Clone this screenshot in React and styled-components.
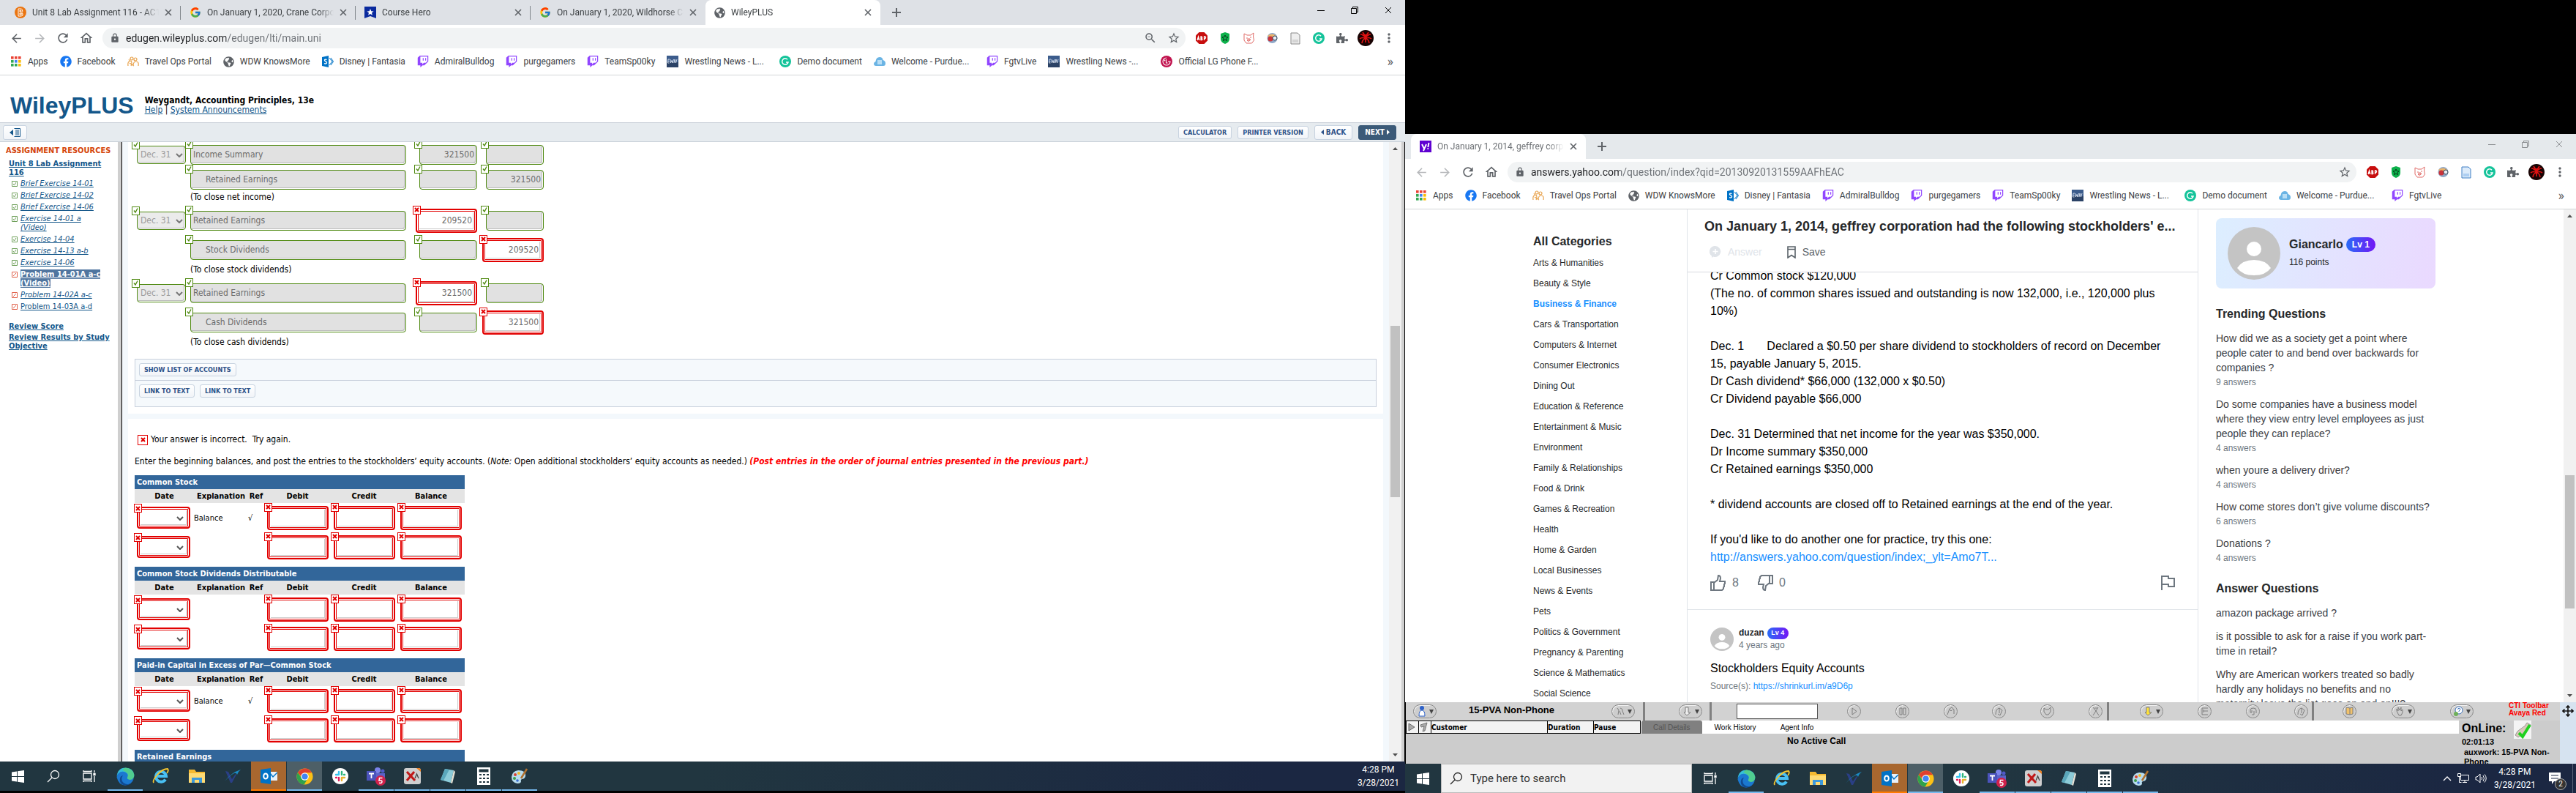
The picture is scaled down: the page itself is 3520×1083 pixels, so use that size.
import React from 'react';
import styled, { createGlobalStyle, css } from 'styled-components';
import { FcGoogle } from 'react-icons/fc';
import { FaFacebook, FaTwitch, FaPuzzlePiece, FaGlobeAmericas } from 'react-icons/fa';
import { MdArrowBack, MdArrowForward, MdRefresh, MdOutlineHome, MdLock, MdStarBorder, MdMoreVert, MdZoomOut } from 'react-icons/md';

const GlobalStyle = createGlobalStyle`
  * { box-sizing: border-box; }
  body { margin: 0; background: #000; overflow: hidden; font-family: 'Liberation Sans', Arial, sans-serif; }
  button, input, select { font: inherit; margin: 0; padding: 0; }
  button { background: none; border: 0; color: inherit; }
  svg { display: block; flex: none; }
  h1, h2, p, ul { margin: 0; padding: 0; }
  ul { list-style: none; }
`;

const uiFont = "Roboto, 'Open Sans', sans-serif";
const wileyFont = "'DejaVu Sans Condensed', 'DejaVu Sans', sans-serif";

/* ---------- desktop ---------- */

const Desktop = styled.div`
  display: grid;
  grid-template-columns: 6fr 5fr;
  height: 100vh;
`;

const Monitor = styled.div`
  display: flex;
  flex-direction: column;
  min-width: 0;
  min-height: 0;
  overflow: hidden;
  padding: ${(p) => p.$pad || 0};
`;

const Window = styled.section`
  flex: 1;
  min-height: 0;
  display: flex;
  flex-direction: column;
  background: #fff;
`;

/* ---------- browser ---------- */

const TabStrip = styled.div`
  display: flex;
  align-items: stretch;
  height: 34px;
  flex: none;
  padding-left: 8px;
  background: ${(p) => (p.$inactive ? '#e5e9ec' : '#dee1e6')};
  font: 12px ${uiFont};
  color: #3c4043;
`;

const TabItem = styled.div`
  display: flex;
  align-items: center;
  gap: 8px;
  width: 239px;
  padding: 0 12px;
  position: relative;
  ${(p) =>
    p.$active
      ? css`
          background: #fff;
          border-radius: 8px 8px 0 0;
        `
      : css`
          &:not(:has(+ [data-active]))::after {
            content: '';
            position: absolute;
            right: 0;
            top: 8px;
            height: 19px;
            border-right: 1px solid #80868b;
          }
        `}
`;

const TabTitle = styled.span`
  flex: 1;
  min-width: 0;
  overflow: hidden;
  white-space: nowrap;
  color: ${(p) => (p.$dim ? '#6b6f73' : '#3c4043')};
  mask-image: linear-gradient(90deg, #000 88%, transparent);
`;

const IconButton = styled.button`
  display: flex;
  align-items: center;
  justify-content: center;
  width: ${(p) => p.$w || 32}px;
  flex: none;
  color: ${(p) => p.$c || '#5f6368'};
`;

const WindowControls = styled.div`
  display: flex;
  margin-left: auto;
  padding-bottom: 6px;
  color: ${(p) => (p.$inactive ? '#8a8d90' : '#000')};
`;

const Toolbar = styled.div`
  display: flex;
  align-items: center;
  height: 36px;
  flex: none;
  padding: 0 6px;
`;

const Omnibox = styled.div`
  flex: 1;
  display: flex;
  align-items: center;
  height: 28px;
  border-radius: 14px;
  background: #f1f3f4;
  padding-left: 10px;
  margin: 0 6px;
  color: #5f6368;
`;

const UrlInput = styled.input`
  flex: 1;
  border: 0;
  outline: 0;
  margin-left: 8px;
  font: 14px ${uiFont};
  color: #202124;
  background: linear-gradient(90deg, #202124 ${(p) => p.$host}px, #6b6f74 ${(p) => p.$host}px);
  background-clip: text;
  -webkit-text-fill-color: transparent;
`;

const Bookmarks = styled.nav`
  display: flex;
  align-items: center;
  gap: 16px;
  height: 33px;
  flex: none;
  padding: 0 14px 4px;
  border-bottom: 1px solid #d3d5d8;
  font: 12px ${uiFont};
`;

const Bookmark = styled.a`
  display: flex;
  align-items: center;
  gap: 8px;
  width: ${(p) => (p.$capped ? '138px' : 'auto')};
  color: #3c4043;
  text-decoration: none;
  white-space: nowrap;
`;

const More = styled.button`
  margin-left: auto;
  font-size: 18px;
  line-height: 18px;
  padding-right: 2px;
  color: #5f6368;
`;

const Cross = ({ size = 10, w = 1.6 }) => (
  <svg width={size} height={size} viewBox="0 0 10 10" stroke="currentColor" strokeWidth={w}>
    <path d="M1 1l8 8M9 1L1 9" />
  </svg>
);

const Globe = () => <FaGlobeAmericas size={15} color="#5f6368" />;

const Blackboard = () => (
  <svg width="16" height="16" viewBox="0 0 16 16">
    <circle cx="8" cy="8" r="8" fill="#ea7511" />
    <path d="M5 3v10h4q3-.5 2-3-.5-1.500-1.500-2 2-1 1-3.500Q10 3 8.500 3z M7 5h1.500q1 1 0 2H7z M7 9h2q1 1 0 2H7z" fill="none" stroke="#fff" strokeWidth="1" />
  </svg>
);

const CourseHero = () => (
  <svg width="16" height="16" viewBox="0 0 16 16">
    <path d="M0 0h16v16l-8-3-8 3z" fill="#0a2a9e" />
    <path d="M8 3l1.300 3.300 3.300.2-2.600 2 .9 3.300L8 10l-2.900 1.800.9-3.300-2.600-2 3.300-.2z" fill="#fff" />
  </svg>
);

const YahooIcon = () => (
  <svg width="16" height="16" viewBox="0 0 16 16">
    <path fill="#5f01d1" d="M0 0h16v16H0z" />
    <path d="M3 5l3 6M9 5l-4 9M12.500 3l-1.200 6M10.500 11h1.500" stroke="#fff" strokeWidth="1.900" />
  </svg>
);

const AppsIcon = () => (
  <svg width="16" height="16" viewBox="0 0 16 16">
    {['#ea4335', '#ea4335', '#ea4335', '#34a853', '#4285f4', '#fbbc04', '#34a853', '#34a853', '#fbbc04'].map((c, i) => (
      <rect key={i} x={1 + (i % 3) * 5} y={1 + Math.floor(i / 3) * 5} width="3.600" height="3.600" fill={c} />
    ))}
  </svg>
);

const Travel = () => (
  <svg width="16" height="14" viewBox="0 0 16 14" fill="none" stroke="#e8a24c" strokeWidth="1.200">
    <circle cx="6" cy="3" r="2" />
    <circle cx="11" cy="4" r="2" />
    <path d="M1 13q-1-7 4-7 2 3 0 7M8 13q0-6 4-6t3 6M3 9l6 4M2 4l2 3" />
  </svg>
);

const Sharepoint = () => (
  <svg width="16" height="16" viewBox="0 0 16 16">
    <path d="M0 2l9-2v16l-9-2z" fill="#0072c6" />
    <path d="M10 3l4 5-4 5M12 3l3.500 5-3.500 5" fill="none" stroke="#3a92d2" strokeWidth="1.200" />
    <path d="M6.500 5.500q-3-1-3 .8 0 1 1.500 1.600t1.500 1.700q0 2-3.500 1" fill="none" stroke="#fff" strokeWidth="1.400" />
  </svg>
);

const Ewn = () => (
  <svg width="16" height="16" viewBox="0 0 16 16">
    <path fill="#3c5c8c" d="M0 0h16v16H0z" />
    <path fill="#2b4266" d="M0 9h16v7H0z" />
    <path d="M4 5H2l-.5 5h2M2 7.500h1.500M5 5l.4 5L7 6.500 8 10l1.500-5M10 10l1-5 1.500 5 1.500-5" fill="none" stroke="#dfe7f2" strokeWidth=".9" />
  </svg>
);

const Grammarly = () => (
  <svg width="16" height="16" viewBox="0 0 16 16">
    <circle cx="8" cy="8" r="8" fill="#15c39a" />
    <path d="M11 5.200A4.200 4.200 0 1 0 12 9H9" fill="none" stroke="#fff" strokeWidth="1.500" />
  </svg>
);

const Purdue = () => (
  <svg width="16" height="12" viewBox="0 0 16 12">
    <path d="M3 12q-3 0-3-3 0-2 2.500-3Q3 0 8 0q4 0 4.500 4Q16 5 16 8.500q0 3.500-3 3.500z" fill="#6bb4e4" />
    <rect x="5" y="4" width="6" height="6" fill="#b9def5" />
  </svg>
);

const Lg = () => (
  <svg width="16" height="16" viewBox="0 0 16 16">
    <circle cx="8" cy="8" r="8" fill="#c1134e" />
    <path d="M8 3a5 5 0 1 0 5 5h-3M7.500 5v5H9.500" fill="none" stroke="#fff" strokeWidth="1.100" />
    <circle cx="5.500" cy="6.500" r=".9" fill="#fff" />
  </svg>
);

const DocIcon = ({ on }) => (
  <svg width="14" height="17" viewBox="0 0 14 17">
    <path d="M1 1h9l3 3v12H1z" fill={on ? '#dcebfa' : '#eee'} stroke={on ? '#3f7fc4' : '#888'} />
    <path d="M3 13h8M3 11h8" stroke={on ? '#7fb2e8' : '#bbb'} />
  </svg>
);

const getExtensions = (docOn) => [
  <svg key="abp" width="18" height="18" viewBox="0 0 18 18">
    <path d="M5.500 1h7L17 5.500v7L12.500 17h-7L1 12.500v-7z" fill="#c70d0d" />
    <path d="M3 12l1.500-5L6 12M3.500 10.500h2M8 7v4.500h1.500q1-1.200-.3-2.300 1-1.200-.3-2.200zM12.500 12V7h1.300q1.500 1.300 0 2.600h-1.300" fill="none" stroke="#fff" strokeWidth="1.300" />
  </svg>,
  <svg key="shield" width="14" height="16" viewBox="0 0 14 16">
    <path d="M7 0l6 2v7q0 5-6 7-6-2-6-7V2z" fill="#0db14b" />
    <path d="M7 4l1.200 2.600 2.800.3-2.100 1.900.6 2.800L7 10.200l-2.500 1.400.6-2.800L3 6.900l2.800-.3z" fill="none" stroke="#08391b" />
  </svg>,
  <svg key="pig" width="17" height="17" viewBox="0 0 17 17" fill="none" stroke="#e06a67">
    <path d="M2 2l4 2h5l4-3-.5 5 1 5-3 4H5l-3-4zM5 8h2M10 7h2M6 11q2 3 5-1M7 9h3v2H7z" />
  </svg>,
  <svg key="ball" width="17" height="17" viewBox="0 0 17 17">
    <circle cx="8.500" cy="8" r="7" fill="#8fa8c8" />
    <path d="M2 5q6-5 12 0L9 9z" fill="#e9b36a" />
    <circle cx="6" cy="9" r="3.500" fill="#c9333b" />
    <circle cx="12" cy="8" r="3" fill="#e8edf5" stroke="#345" />
  </svg>,
  <DocIcon key="doc" on={docOn} />,
  <Grammarly key="gram" />,
  <FaPuzzlePiece key="puzzle" size={16} />,
  <svg key="avatar" width="22" height="22" viewBox="0 0 22 22">
    <circle cx="11" cy="11" r="11" fill="#180303" />
    <path d="M11 6v11M4 6q4 0 7 5 3-5 7-5M3 12q4-3 8 0 4-3 8 0M6 18q1-6 5-6t5 6M7 3l4 6 4-6" fill="none" stroke="#e01212" strokeWidth="1.700" />
  </svg>,
  <MdMoreVert key="menu" size={20} />,
];

const bookmarks = [
  { label: 'Apps', icon: <AppsIcon /> },
  { label: 'Facebook', icon: <FaFacebook size={16} color="#1877f2" /> },
  { label: 'Travel Ops Portal', icon: <Travel /> },
  { label: 'WDW KnowsMore', icon: <Globe /> },
  { label: 'Disney | Fantasia', icon: <Sharepoint /> },
  { label: 'AdmiralBulldog', icon: <FaTwitch size={16} color="#9146ff" /> },
  { label: 'purgegamers', icon: <FaTwitch size={16} color="#9146ff" /> },
  { label: 'TeamSp00ky', icon: <FaTwitch size={16} color="#9146ff" /> },
  { label: 'Wrestling News - L...', icon: <Ewn />, capped: true },
  { label: 'Demo document', icon: <Grammarly /> },
  { label: 'Welcome - Purdue...', icon: <Purdue />, capped: true },
  { label: 'FgtvLive', icon: <FaTwitch size={16} color="#9146ff" /> },
  { label: 'Wrestling News -...', icon: <Ewn />, capped: true },
  { label: 'Official LG Phone F...', icon: <Lg /> },
];

const BrowserChrome = ({ tabs, active, inactive, url, host, zoomed, marks }) => (
  <>
    <TabStrip $inactive={inactive}>
      {tabs.map((t, i) => (
        <TabItem key={t.title} $active={i === active} data-active={i === active || undefined}>
          {t.icon}
          <TabTitle $dim={inactive}>{t.title}</TabTitle>
          <IconButton $w={10} aria-label="Close tab">
            <Cross />
          </IconButton>
        </TabItem>
      ))}
      <IconButton $w={44} aria-label="New tab">
        <svg width="12" height="12" viewBox="0 0 12 12" stroke="currentColor" strokeWidth="2">
          <path d="M6 0v12M0 6h12" />
        </svg>
      </IconButton>
      <WindowControls $inactive={inactive}>
        <IconButton $w={46} $c="inherit" aria-label="Minimize">
          <svg width="10" height="10" viewBox="0 0 10 10" stroke="currentColor">
            <path d="M0 5.500h10" />
          </svg>
        </IconButton>
        <IconButton $w={46} $c="inherit" aria-label="Restore">
          <svg width="10" height="10" viewBox="0 0 10 10" stroke="currentColor" fill="none">
            <path d="M.5 2.500h7v7h-7zM2.500 2.500v-2h7v7h-2" />
          </svg>
        </IconButton>
        <IconButton $w={46} $c="inherit" aria-label="Close">
          <Cross w={1} />
        </IconButton>
      </WindowControls>
    </TabStrip>
    <Toolbar>
      <IconButton $c={inactive && '#b6b8bb'} aria-label="Back"><MdArrowBack size={19} /></IconButton>
      <IconButton $c="#b6b8bb" aria-label="Forward"><MdArrowForward size={19} /></IconButton>
      <IconButton aria-label="Reload"><MdRefresh size={20} /></IconButton>
      <IconButton aria-label="Home"><MdOutlineHome size={20} /></IconButton>
      <Omnibox>
        <MdLock size={14} />
        <UrlInput aria-label="Address" defaultValue={url} $host={host} />
        {zoomed && <IconButton aria-label="Zoom"><MdZoomOut size={18} /></IconButton>}
        <IconButton aria-label="Bookmark this page"><MdStarBorder size={18} /></IconButton>
      </Omnibox>
      {getExtensions(inactive).map((icon, i) => (
        <IconButton key={i} aria-label={`Extension ${i + 1}`}>{icon}</IconButton>
      ))}
    </Toolbar>
    <Bookmarks>
      {bookmarks.slice(0, marks).map((b, i) => (
        <Bookmark key={i} href="#" $capped={b.capped}>
          {b.icon}
          {b.label}
        </Bookmark>
      ))}
      <More aria-label="More bookmarks">»</More>
    </Bookmarks>
  </>
);

/* ---------- scrollbar ---------- */

const Rail = styled.div`
  display: flex;
  flex-direction: column;
  align-items: center;
  width: 17px;
  flex: none;
  padding: 7px 0;
  background: #f1f1f1;
`;

const Thumb = styled.div`
  width: 13px;
  flex: ${(p) => p.$size};
  background: #c1c1c1;
`;

const Space = styled.div`
  flex: ${(p) => p.$size};
`;

const Scrollbar = ({ before, size, after }) => (
  <Rail>
    <svg width="7" height="4" viewBox="0 0 7 4"><path d="M0 4h7L3.500 0z" fill="#505050" /></svg>
    <Space $size={before} />
    <Thumb $size={size} />
    <Space $size={after} />
    <svg width="7" height="4" viewBox="0 0 7 4"><path d="M0 0h7L3.500 4z" fill="#505050" /></svg>
  </Rail>
);

/* ---------- WileyPLUS ---------- */

const WileyPage = styled.div`
  flex: 1;
  min-height: 0;
  display: flex;
  flex-direction: column;
  font: 12px/15px ${wileyFont};
  color: #000;
`;

const WileyHeader = styled.header`
  display: flex;
  align-items: center;
  gap: 15px;
  height: 64px;
  padding: 18px 14px 0;
  flex: none;
`;

const Logo = styled.h1`
  font: bold 32px/36px 'Liberation Sans', Arial, sans-serif;
  color: #14578a;
`;

const CourseInfo = styled.div`
  line-height: 13px;

  a {
    color: #14578a;
  }
`;

const ActionBar = styled.div`
  display: flex;
  align-items: center;
  gap: 8px;
  height: 27px;
  flex: none;
  padding: 0 12px 0 4px;
  background: #e6ebef;
  border-top: 1px solid #c9d0d8;
  border-bottom: 1px solid #c9d0d8;
`;

const SmallButton = styled.button`
  display: flex;
  align-items: center;
  gap: 3px;
  height: ${(p) => (p.$tall ? 20 : 18)}px;
  padding: 0 ${(p) => (p.$tall ? 8 : 6)}px;
  border: 1px solid ${(p) => (p.$dark ? '#3b5a78' : '#c8d3e0')};
  border-radius: 3px;
  background: ${(p) => (p.$dark ? '#3b5a78' : 'linear-gradient(#fff, #f1f4f8)')};
  color: ${(p) => (p.$dark ? '#fff' : '#2d5289')};
  font: bold ${(p) => (p.$tall ? 10 : 9)}px ${wileyFont};
`;

const BarSpacer = styled.div`
  flex: 1;
`;

const WileyBody = styled.div`
  flex: 1;
  min-height: 0;
  display: flex;
`;

const Resources = styled.aside`
  width: 167px;
  flex: none;
  padding: 5px 4px 0 12px;
  border-right: 1px solid #000;
  box-shadow: inset -5px 0 #cfcfcf;
  font-size: 11px;
  line-height: 12px;

  a {
    color: #14578a;
  }
`;

const ResourcesTitle = styled.h2`
  margin: 0 0 5px -4px;
  font-size: 11px;
  line-height: 14px;
  color: #d4440c;
  white-space: nowrap;
`;

const ResourceLink = styled.a`
  display: block;
  margin-bottom: 3px;
  font-weight: bold;
`;

const ResourceList = styled.ul`
  padding: 0 0 11px 4px;
`;

const ResourceItem = styled.li`
  display: flex;
  gap: 4px;
  margin-bottom: 4px;
  padding-right: 16px;

  a {
    font-style: ${(p) => (p.$plain ? 'normal' : 'italic')};
    ${(p) =>
      p.$current &&
      css`
        font-style: normal;
        font-weight: bold;
        color: #fff;
        background: #4f759f;
      `}
  }
`;

const Content = styled.main`
  flex: 1;
  min-width: 0;
  overflow: hidden;
  border: solid #f3f8fc;
  border-width: 0 8px;
`;

const Journal = styled.div`
  padding: 0 9px 9px 12px;
`;

const JournalRow = styled.div`
  display: grid;
  grid-template-columns: 73px 313px 91px 78px;
  align-items: center;
  height: ${(p) => (p.$loose ? 40 : 34)}px;
`;

const JournalNote = styled.p`
  height: 19px;
  padding-left: 73px;
`;

const FieldWrap = styled.span`
  display: block;
  position: relative;
  width: ${(p) => p.$w}px;
  margin-left: ${(p) => p.$ml || 0}px;
`;

const boxLook = css`
  display: block;
  width: 100%;
  outline: 0;
  border-radius: 4px;
  color: #6b6b6b;
  ${(p) =>
    p.$wrong
      ? css`
          border: 2px solid #e20000;
          background: #fff;
          padding: 0 5px;
          box-shadow: inset 0 0 0 1px #fff, inset 0 0 0 2px #e20000, inset 0 0 0 3px #fff, inset -1px -1px 0 3px #ccc;
        `
      : css`
          border: 1px solid #508a12;
          background: #e1e1e1;
          padding: 0 3px;
          box-shadow: inset -1px -1px #fff, inset -2px -2px #bbb;
        `}
`;

const FieldInput = styled.input`
  ${boxLook}
  height: ${(p) => (p.$wrong ? 33 : 27)}px;
  text-align: ${(p) => (p.$right ? 'right' : 'left')};
  ${(p) => p.$indent && 'padding-left: 20px;'}
`;

const FieldSelect = styled.select`
  ${boxLook}
  appearance: none;
  height: ${(p) => (p.$wrong ? 30 : 25)}px;
  ${(p) => !p.$wrong && 'background: #ebebeb; color: #9a9a9a; padding-left: 4px;'}
`;

const SelectArrow = styled.svg`
  position: absolute;
  right: ${(p) => (p.$wrong ? 9 : 4)}px;
  top: calc(50% - 2px);
  pointer-events: none;
`;

const Badge = styled.span`
  display: flex;
  align-items: center;
  justify-content: center;
  width: ${(p) => p.$size || 11}px;
  height: ${(p) => p.$size || 12}px;
  border: 1px solid currentColor;
  background: #fff;
  color: ${(p) => (p.$wrong ? '#e20000' : '#508a12')};
`;

const CornerBadge = styled(Badge)`
  position: absolute;
  left: ${(p) => (p.$wrong ? -4 : -7)}px;
  top: ${(p) => (p.$wrong ? -4 : -7)}px;
`;

const Mark = ({ wrong }) => (
  <svg width="7" height="7" viewBox="0 0 7 7" fill="none" stroke="currentColor" strokeWidth={wrong ? 2 : 1.4}>
    <path d={wrong ? 'M1 1l5 5M6 1L1 6' : 'M1 3.500l2 2.500 3-5.500'} />
  </svg>
);

const Field = ({ label, value = '', w, ml, wrong, right, indent }) => (
  <FieldWrap $w={w} $ml={ml}>
    <FieldInput aria-label={label} defaultValue={value} $wrong={wrong} $right={right} $indent={indent} />
    <CornerBadge $wrong={wrong}><Mark wrong={wrong} /></CornerBadge>
  </FieldWrap>
);

const DateField = ({ value = '', w, ml, wrong }) => (
  <FieldWrap $w={w} $ml={ml}>
    <FieldSelect aria-label="Date" defaultValue={value} $wrong={wrong}>
      <option>{value}</option>
    </FieldSelect>
    <SelectArrow $wrong={wrong} width="10" height="6" viewBox="0 0 10 6" fill="none" stroke={wrong ? '#555' : '#777'} strokeWidth="2">
      <path d="M1 1l4 4 4-4" />
    </SelectArrow>
    <CornerBadge $wrong={wrong}><Mark wrong={wrong} /></CornerBadge>
  </FieldWrap>
);

const Amount = ({ label, value, wrong }) => (
  <Field label={label} value={value} right wrong={wrong} w={wrong ? 84 : 79} ml={wrong ? -5 : 0} />
);

const PanelWrap = styled.div`
  padding: 0 9px 9px;
`;

const LinkPanel = styled.div`
  margin-top: 2px;
  border: 1px solid #c8d0dc;
  background: #f5f9fc;
`;

const LinkRow = styled.div`
  display: flex;
  gap: 7px;
  padding: 5px 5px ${(p) => (p.$last ? 12 : 5)}px;

  & + & {
    border-top: 1px solid #c8d0dc;
  }
`;

const Band = styled.div`
  height: 7px;
  background: #f3f8fc;
`;

const Posting = styled.div`
  padding: 21px 9px 0;
`;

const Feedback = styled.p`
  display: flex;
  align-items: center;
  gap: 4px;
  padding-left: 4px;
  margin-bottom: 15px;
`;

const Instructions = styled.p`
  margin-bottom: 11px;

  strong {
    color: #f00;
    font-style: italic;
  }
`;

const Ledger = styled.table`
  width: 451px;
  table-layout: fixed;
  border-collapse: collapse;
  margin-bottom: 7px;
  text-align: left;
  font-size: 11px;

  caption,
  th {
    height: 19px;
    line-height: 19px;
    padding: 0;
  }
  caption {
    padding-left: 3px;
    text-align: left;
    font-weight: bold;
    color: #fff;
    background: #32669a;
  }
  th {
    background: #e4e4e4;
    text-align: center;
  }
  td {
    height: 40px;
    padding: 0;
    white-space: nowrap;
  }
`;

const resources = [
  { t: 'Brief Exercise 14-01' },
  { t: 'Brief Exercise 14-02' },
  { t: 'Brief Exercise 14-06' },
  { t: 'Exercise 14-01 a (Video)' },
  { t: 'Exercise 14-04' },
  { t: 'Exercise 14-13 a-b' },
  { t: 'Exercise 14-06' },
  { t: 'Problem 14-01A a-c (Video)', red: true, current: true },
  { t: 'Problem 14-02A a-c', red: true },
  { t: 'Problem 14-03A a-d', red: true, plain: true },
];

const journal = [
  { date: true, account: 'Income Summary', debit: '321500' },
  { account: 'Retained Earnings', indent: true, credit: '321500' },
  { note: '(To close net income)' },
  { date: true, account: 'Retained Earnings', debit: '209520', wrong: 'debit', loose: true },
  { account: 'Stock Dividends', indent: true, credit: '209520', wrong: 'credit', loose: true },
  { note: '(To close stock dividends)' },
  { date: true, account: 'Retained Earnings', debit: '321500', wrong: 'debit', loose: true },
  { account: 'Cash Dividends', indent: true, credit: '321500', wrong: 'credit', loose: true },
  { note: '(To close cash dividends)' },
];

const ledgers = [
  { title: 'Common Stock', balance: true },
  { title: 'Common Stock Dividends Distributable' },
  { title: 'Paid-in Capital in Excess of Par—Common Stock', balance: true },
  { title: 'Retained Earnings', balance: true },
];

const LedgerTable = ({ title, balance }) => (
  <Ledger>
    <caption>{title}</caption>
    <colgroup>
      <col width="81" />
      <col width="74" />
      <col width="22" />
      <col width="91" />
      <col width="91" />
      <col width="92" />
    </colgroup>
    <thead>
      <tr>
        {['Date', 'Explanation', 'Ref', 'Debit', 'Credit', 'Balance'].map((h) => (
          <th key={h}>{h}</th>
        ))}
      </tr>
    </thead>
    <tbody>
      {[0, 1].map((r) => (
        <tr key={r}>
          <td><DateField w={73} ml={3} wrong /></td>
          <td>{balance && r === 0 && 'Balance'}</td>
          <td>{balance && r === 0 && '√'}</td>
          {['Debit', 'Credit', 'Balance'].map((l) => (
            <td key={l}><Field label={l} w={84} ml={4} wrong right /></td>
          ))}
        </tr>
      ))}
    </tbody>
  </Ledger>
);

const WindowEdge = styled.div`
  width: 5px;
  flex: none;
  background: #cfcfcf;
  border-right: 1px solid #000;
`;

const Wiley = () => (
  <WileyPage>
    <WileyHeader>
      <Logo>WileyPLUS</Logo>
      <CourseInfo>
        <strong>Weygandt, Accounting Principles, 13e</strong>
        <br />
        <a href="#">Help</a> | <a href="#">System Announcements</a>
      </CourseInfo>
    </WileyHeader>
    <ActionBar>
      <SmallButton $tall aria-label="Toggle resources">
        <svg width="15" height="12" viewBox="0 0 15 12" fill="none" stroke="#14578a">
          <path d="M6.500.5h8v11h-8M8 3h5M8 5h5M8 7h5M8 9h5" />
          <path d="M5 2v8L0 6z" fill="#14578a" stroke="none" />
        </svg>
      </SmallButton>
      <BarSpacer />
      <SmallButton>CALCULATOR</SmallButton>
      <SmallButton>PRINTER VERSION</SmallButton>
      <SmallButton $tall>
        <svg width="4" height="7" viewBox="0 0 4 7"><path d="M4 0v7L0 3.500z" fill="currentColor" /></svg>
        BACK
      </SmallButton>
      <SmallButton $tall $dark>
        NEXT
        <svg width="4" height="7" viewBox="0 0 4 7"><path d="M0 0v7l4-3.500z" fill="currentColor" /></svg>
      </SmallButton>
    </ActionBar>
    <WileyBody>
      <Resources>
        <ResourcesTitle>ASSIGNMENT RESOURCES</ResourcesTitle>
        <ResourceLink href="#">Unit 8 Lab Assignment 116</ResourceLink>
        <ResourceList>
          {resources.map((r) => (
            <ResourceItem key={r.t} $current={r.current} $plain={r.plain}>
              <svg width="8" height="12" viewBox="0 0 8 12" fill="none" stroke={r.red ? '#e0604a' : '#6fa05a'}>
                <path d={r.red ? 'M.5 2.500h7v7h-7zM2 8l4-4' : 'M.5 2.500h7v7h-7zM2 6l1.500 2L6 4'} />
              </svg>
              <span><a href="#">{r.t}</a></span>
            </ResourceItem>
          ))}
        </ResourceList>
        <ResourceLink href="#">Review Score</ResourceLink>
        <ResourceLink href="#">Review Results by Study Objective</ResourceLink>
      </Resources>
      <Content>
        <Journal>
          {journal.map((j, i) =>
            j.note ? (
              <JournalNote key={i}>{j.note}</JournalNote>
            ) : (
              <JournalRow key={i} $loose={j.loose}>
                {j.date ? <DateField value="Dec. 31" w={67} /> : <span />}
                <Field label="Account" value={j.account} w={295} indent={j.indent} />
                <Amount label="Debit" value={j.debit} wrong={j.wrong === 'debit'} />
                <Amount label="Credit" value={j.credit} wrong={j.wrong === 'credit'} />
              </JournalRow>
            )
          )}
        </Journal>
        <PanelWrap>
          <LinkPanel>
            <LinkRow><SmallButton>SHOW LIST OF ACCOUNTS</SmallButton></LinkRow>
            <LinkRow $last>
              <SmallButton>LINK TO TEXT</SmallButton>
              <SmallButton>LINK TO TEXT</SmallButton>
            </LinkRow>
          </LinkPanel>
        </PanelWrap>
        <Band />
        <Posting>
          <Feedback>
            <Badge $wrong $size={14}><Mark wrong /></Badge>
            <span>Your answer is incorrect.&nbsp; Try again.</span>
          </Feedback>
          <Instructions>
            Enter the beginning balances, and post the entries to the stockholders’ equity accounts. (<em>Note:</em> Open
            additional stockholders’ equity accounts as needed.){' '}
            <strong>(Post entries in the order of journal entries presented in the previous part.)</strong>
          </Instructions>
          {ledgers.map((l) => (
            <LedgerTable key={l.title} {...l} />
          ))}
        </Posting>
      </Content>
      <Scrollbar before={237} size={231} after={346} />
      <WindowEdge />
    </WileyBody>
  </WileyPage>
);

/* ---------- Yahoo Answers ---------- */

const YahooPage = styled.div`
  flex: 1;
  min-height: 0;
  display: grid;
  grid-template-columns: minmax(0, 385fr) minmax(0, 699fr) minmax(0, 499fr) 17px;
  grid-template-rows: 100%;
  overflow: hidden;
  color: #26282a;
`;

const Categories = styled.nav`
  padding: 34px 0 0 175px;
  font-size: 12px;
  line-height: 28px;

  a {
    display: block;
    color: #26282a;
    text-decoration: none;
  }
  a[aria-current] {
    color: #188fff;
    font-weight: bold;
  }
`;

const ColumnTitle = styled.h2`
  font-size: 16px;
  line-height: 20px;
  margin-bottom: ${(p) => p.$mb}px;
`;

const Thread = styled.article`
  border: solid #e0e4e9;
  border-width: 0 1px;
`;

const ThreadHeader = styled.header`
  padding: 11px 23px 16px;
  border-bottom: 1px solid #d8dade;

  h1 {
    font-size: 18px;
    line-height: 24px;
    white-space: nowrap;
  }
`;

const ThreadActions = styled.div`
  display: flex;
  gap: 34px;
  padding: 12px 7px 0;
`;

const ThreadAction = styled.button`
  display: flex;
  align-items: center;
  gap: 9px;
  font-size: 14px;
  line-height: 22px;
  color: ${(p) => (p.$off ? '#e0e4e9' : '#5b636a')};
`;

const AnswerClip = styled.div`
  height: 461px;
  display: flex;
  flex-direction: column;
  justify-content: flex-end;
  overflow: hidden;
  padding: 0 31px;
  border-bottom: 1px solid #e0e4e9;
`;

const AnswerText = styled.div`
  font-size: 16px;
  line-height: 24px;
  color: #000;
  white-space: pre;

  a {
    color: #188fff;
    text-decoration: none;
  }
`;

const Votes = styled.div`
  display: flex;
  align-items: center;
  gap: 25px;
  height: 24px;
  margin: 12px 0 25px;
  color: #6e7780;
`;

const Vote = styled.button`
  display: flex;
  align-items: center;
  gap: 8px;
  font-size: 16px;

  &:last-child {
    margin-left: auto;
  }
`;

const Reply = styled.div`
  padding: 23px 31px;
  font-size: 12px;

  a {
    color: #188fff;
    text-decoration: none;
  }
`;

const Person = styled.div`
  display: flex;
  align-items: center;
  gap: ${(p) => (p.$big ? 12 : 7)}px;
  line-height: ${(p) => (p.$big ? 24 : 17)}px;
  font-size: 12px;
  color: ${(p) => (p.$big ? '#26282a' : '#6e7780')};

  strong {
    font-size: ${(p) => (p.$big ? 16 : 12)}px;
    color: #26282a;
  }
`;

const PersonName = styled.div`
  display: flex;
  align-items: center;
  gap: 4px;
`;

const Level = styled.span`
  display: flex;
  align-items: center;
  justify-content: center;
  width: ${(p) => (p.$big ? 40 : 29)}px;
  height: ${(p) => (p.$big ? 20 : 16)}px;
  border-radius: 10px;
  background: linear-gradient(90deg, #2a6cf7, #7316f5);
  color: #fff;
  font-weight: bold;
  font-size: ${(p) => (p.$big ? 12 : 9)}px;
`;

const ReplyText = styled.p`
  margin: 11px 0 3px;
  font-size: 16px;
  line-height: 24px;
  color: #000;
`;

const Source = styled.p`
  line-height: 18px;
  color: #6e7780;
`;

const Trends = styled.aside`
  padding: 12px 0 0 24px;
`;

const ProfileCard = styled.div`
  width: 300px;
  margin-bottom: 3px;
  padding: 12px 16px;
  border-radius: 8px;
  background: linear-gradient(100deg, #dceeff, #ead9ff);
`;

const TrendSection = styled.section`
  width: 300px;
  padding-top: 22px;
`;

const TrendItem = styled.li`
  margin-bottom: ${(p) => (p.$answers ? 10 : 12)}px;
  font-size: 14px;
  line-height: 20px;

  &:last-child {
    margin-bottom: 0;
  }
  a {
    display: block;
    color: #3d4045;
    text-decoration: none;
  }
  small {
    display: block;
    font-size: 12px;
    color: #6e7780;
  }
`;

const AvatarIcon = ({ size }) => (
  <svg width={size} height={size} viewBox="0 0 72 72">
    <circle cx="36" cy="36" r="36" fill="#c4c4c4" />
    <circle cx="36" cy="30" r="10" fill="#fff" />
    <path d="M13 56q7-11 23-11t23 11q-7 10-23 10T13 56z" fill="#fff" />
  </svg>
);

const Thumbs = ({ down }) => (
  <svg width="22" height="22" viewBox="0 0 22 22" fill="none" stroke="currentColor" strokeWidth="2">
    <path
      transform={down ? 'rotate(180 11 11)' : undefined}
      d="M1 10h4v11H1zM5 11l5-4 1-6q3 0 3 4l-1 4h7v3l-1 1v3l-1 1v2l-2 2H5"
    />
  </svg>
);

const categories = [
  'Arts & Humanities', 'Beauty & Style', 'Business & Finance', 'Cars & Transportation', 'Computers & Internet',
  'Consumer Electronics', 'Dining Out', 'Education & Reference', 'Entertainment & Music', 'Environment',
  'Family & Relationships', 'Food & Drink', 'Games & Recreation', 'Health', 'Home & Garden', 'Local Businesses',
  'News & Events', 'Pets', 'Politics & Government', 'Pregnancy & Parenting', 'Science & Mathematics', 'Social Science',
];

const trending = [
  ['How did we as a society get a point where people cater to and bend over backwards for companies ?', 9],
  ['Do some companies have a business model where they view entry level employees as just people they can replace?', 4],
  ['when youre a delivery driver?', 4],
  ['How come stores don’t give volume discounts?', 6],
  ['Donations ?', 4],
];

const unanswered = [
  'amazon package arrived ?',
  'is it possible to ask for a raise if you work part-time in retail?',
  'Why are American workers treated so badly hardly any holidays no benefits and no maternity leave the list goes on and on!!!?',
];

const answer = `Cr Common stock $120,000
(The no. of common shares issued and outstanding is now 132,000, i.e., 120,000 plus
10%)

Dec. 1       Declared a $0.50 per share dividend to stockholders of record on December
15, payable January 5, 2015.
Dr Cash dividend* $66,000 (132,000 x $0.50)
Cr Dividend payable $66,000

Dec. 31 Determined that net income for the year was $350,000.
Dr Income summary $350,000
Cr Retained earnings $350,000

* dividend accounts are closed off to Retained earnings at the end of the year.

If you'd like to do another one for practice, try this one:
`;

const Yahoo = () => (
  <YahooPage>
    <Categories>
      <ColumnTitle $mb={5}>All Categories</ColumnTitle>
      {categories.map((c) => (
        <a key={c} href="#" aria-current={c === 'Business & Finance' ? 'page' : undefined}>{c}</a>
      ))}
    </Categories>
    <Thread>
      <ThreadHeader>
        <h1>On January 1, 2014, geffrey corporation had the following stockholders' e...</h1>
        <ThreadActions>
          <ThreadAction $off>
            <svg width="16" height="16" viewBox="0 0 16 16">
              <path d="M8 0a7.500 7.500 0 1 1-3 14.500L3 16v-2.500A7.500 7.500 0 0 1 8 0z" fill="currentColor" />
              <path d="M8 4v7M4.500 7.500h7" stroke="#fff" strokeWidth="1.600" />
            </svg>
            Answer
          </ThreadAction>
          <ThreadAction>
            <svg width="12" height="17" viewBox="0 0 12 17" fill="none" stroke="currentColor" strokeWidth="1.600">
              <path d="M1 1h10v15l-5-3.500L1 16zM1 4.500h10" />
            </svg>
            Save
          </ThreadAction>
        </ThreadActions>
      </ThreadHeader>
      <AnswerClip>
        <AnswerText>
          {answer}
          <a href="#">http://answers.yahoo.com/question/index;_ylt=Amo7T...</a>
        </AnswerText>
        <Votes>
          <Vote><Thumbs />8</Vote>
          <Vote><Thumbs down />0</Vote>
          <Vote aria-label="Report">
            <svg width="20" height="20" viewBox="0 0 20 20" fill="none" stroke="currentColor" strokeWidth="2">
              <path d="M2 20V1h9v3h8v11h-8v-3H2" />
            </svg>
          </Vote>
        </Votes>
      </AnswerClip>
      <Reply>
        <Person>
          <AvatarIcon size={32} />
          <div>
            <PersonName><strong>duzan</strong><Level>Lv 4</Level></PersonName>
            4 years ago
          </div>
        </Person>
        <ReplyText>Stockholders Equity Accounts</ReplyText>
        <Source>Source(s): <a href="#">https://shrinkurl.im/a9D6p</a></Source>
      </Reply>
    </Thread>
    <Trends>
      <ProfileCard>
        <Person $big>
          <AvatarIcon size={72} />
          <div>
            <PersonName><strong>Giancarlo</strong><Level $big>Lv 1</Level></PersonName>
            116 points
          </div>
        </Person>
      </ProfileCard>
      <TrendSection>
        <ColumnTitle $mb={13}>Trending Questions</ColumnTitle>
        <ul>
          {trending.map(([q, n]) => (
            <TrendItem key={q} $answers>
              <a href="#">{q}</a>
              <small>{n} answers</small>
            </TrendItem>
          ))}
        </ul>
      </TrendSection>
      <TrendSection>
        <ColumnTitle $mb={13}>Answer Questions</ColumnTitle>
        <ul>
          {unanswered.map((q) => (
            <TrendItem key={q}><a href="#">{q}</a></TrendItem>
          ))}
        </ul>
      </TrendSection>
    </Trends>
    <Scrollbar before={346} size={179} after={115} />
  </YahooPage>
);

/* ---------- call toolbar ---------- */

const CallApp = styled.section`
  display: flex;
  height: 84px;
  flex: none;
  overflow: hidden;
  border-left: 1px solid #000;
  background: #ccc;
`;

const CallMain = styled.div`
  flex: 1;
  min-width: 0;
`;

const CallBar = styled.div`
  display: grid;
  grid-template-columns: minmax(0, 327fr) minmax(0, 91fr) minmax(0, 543fr) minmax(0, 280fr) minmax(0, 336fr);
  height: 25px;
  background: #d2d2d2;
`;

const CallGroup = styled.div`
  display: flex;
  align-items: center;
  gap: ${(p) => p.$gap || 0}px;
  justify-content: ${(p) => p.$align || 'flex-start'};
  padding: ${(p) => p.$pad};
  border-right: ${(p) => (p.$open ? 0 : 3)}px solid #808080;
`;

const CallTitle = styled.strong`
  flex: 1;
  padding: 0 0 5px 44px;
  font-size: 13px;
`;

const NumberInput = styled.input`
  width: 111px;
  height: 21px;
  border: 1px solid #555;
  background: #fff;
  margin-right: -7px;
`;

const RoundButton = styled.button`
  display: flex;
  align-items: center;
  justify-content: center;
  gap: 4px;
  width: ${(p) => (p.$wide ? 32 : 19)}px;
  height: 19px;
  flex: none;
  border: 1px solid #8a8a8a;
  border-radius: 10px;
  background: #cdcdcd;
  box-shadow: inset 1px 1px #eee;
  color: #777;
`;

const CtiLabel = styled.strong`
  font-size: 10px;
  line-height: 10px;
  padding-bottom: 5px;
  color: #f00;
`;

const CallTabs = styled.div`
  display: flex;
  height: 18px;
  background: #fff;
  font-size: 10px;
`;

const CallGrid = styled.table`
  width: 320px;
  table-layout: fixed;
  border-collapse: collapse;
  background: #f3f3f3;
  font: bold 10px ${wileyFont};
  text-align: left;

  th {
    padding: 0;
    border: 1px solid #000;
  }
`;

const CallTab = styled.button`
  padding: 0 16px;
  margin-left: 1px;
  border-radius: 3px 3px 0 0;
  background: ${(p) => (p.$on ? '#808080' : 'transparent')};
  color: ${(p) => (p.$on ? '#555' : '#000')};
`;

const NoCall = styled.p`
  padding: 3px 0 0 521px;
  font-size: 12px;
  line-height: 15px;
  font-weight: bold;
`;

const CallSplit = styled.div`
  display: flex;
`;

const CallLeft = styled.div`
  flex: 1;
`;

const Status = styled.div`
  width: 138px;
  padding-left: 4px;
  font-size: 11px;
  line-height: 15px;
  font-weight: bold;
`;

const Online = styled.div`
  display: flex;
  justify-content: space-between;
  align-items: flex-start;
  font-size: 16px;
  line-height: 22px;
  width: 95px;
  height: 22px;
`;

const Aux = styled.div`
  padding-left: 3px;
  line-height: 13px;
`;

const MoveStrip = styled.div`
  display: flex;
  justify-content: center;
  width: 22px;
  padding-top: 4px;
  background: #d6e3f0;
`;

const Glyph = ({ d, fill = 'none' }) => (
  <svg width="13" height="15" viewBox="0 0 13 15" fill={fill} stroke="#7d7d7d">
    <path d={d} />
  </svg>
);

const Caret = () => (
  <svg width="6" height="6" viewBox="0 0 6 6"><path d="M0 0h6L3 6z" fill="#444" /></svg>
);

const glyphs = {
  play: 'M4 3v9l6-4.500z',
  pause: 'M3 3h3v9H3zM8 3h3v9H8z',
  phone: 'M2 12l3-8 3-2 3 3v6M5 5l2 2 2-2',
  hand: 'M2 7V4l2 3V2l2 4 2-4v5l2-2v4l-2 4H5z',
  drop: 'M4 2h4v7h3l-5 4-4-4h2z',
  conf: 'M2 12q0-8 5-9l4 3-3 7-3-2M7 3v7',
  hold: 'M2 3l3 2h3l3-3v6l-3 4H5L2 8z',
  cross: 'M3 2l4 5-4 6M10 2L7 7l4 6M5 3h4',
  list: 'M3 3h8M3 3v9h8M5 7h6M5 5v4',
  head: 'M3 9V6q0-3 4-3t4 3v4M3 9h2V6M8 7v5H5',
  people: 'M3 3l2 3-1 6M7 3q4 1 3 4l2 5M6 7l2 5',
  book: 'M2 2l5 1v9l-5-1zM7 3l4-1v9l-4 1',
};

const CallToolbar = () => (
  <CallApp>
    <CallMain>
      <CallBar>
        <CallGroup $pad="0 11px 0 10px">
          <RoundButton $wide aria-label="Agent">
            <svg width="13" height="16" viewBox="0 0 13 16">
              <circle cx="7" cy="3" r="3" fill="#2e62c9" />
              <path d="M3 14q0-8 4-8t4 8z" fill="#fff" stroke="#2e62c9" />
            </svg>
            <Caret />
          </RoundButton>
          <CallTitle>15-PVA Non-Phone</CallTitle>
          <RoundButton $wide aria-label="Transfer"><Glyph d={glyphs.people} /><Caret /></RoundButton>
        </CallGroup>
        <CallGroup $pad="0 10px 0 0" $align="flex-end">
          <RoundButton $wide aria-label="Drop"><Glyph d={glyphs.drop} fill="#eee" /><Caret /></RoundButton>
        </CallGroup>
        <CallGroup $pad="0 0 0 34px" $gap={47}>
          <NumberInput aria-label="Number" />
          {['play', 'pause', 'phone', 'conf', 'hold', 'cross'].map((g) => (
            <RoundButton key={g} aria-label={g}><Glyph d={glyphs[g]} /></RoundButton>
          ))}
        </CallGroup>
        <CallGroup $pad="0 0 0 42px" $gap={47}>
          <RoundButton $wide aria-label="Send">
            <Glyph d={glyphs.drop} fill="#ffe23a" />
            <Caret />
          </RoundButton>
          {['list', 'head', 'conf'].map((g) => (
            <RoundButton key={g} aria-label={g}><Glyph d={glyphs[g]} /></RoundButton>
          ))}
        </CallGroup>
        <CallGroup $pad="0 0 0 39px" $gap={48} $open>
          <RoundButton aria-label="Directory"><Glyph d={glyphs.book} fill="#f2c26b" /></RoundButton>
          <RoundButton $wide aria-label="Work mode"><Glyph d={glyphs.hand} /><Caret /></RoundButton>
          <RoundButton $wide aria-label="Help">
            <svg width="14" height="15" viewBox="0 0 14 15">
              <circle cx="8" cy="6" r="5" fill="#fff" stroke="#3a6fb8" />
              <path d="M6.500 5q0-1.700 1.700-1.700T10 5L8 7v1" fill="none" stroke="#3a6fb8" />
              <circle cx="4" cy="11" r="3" fill="#6fb05a" />
            </svg>
            <Caret />
          </RoundButton>
          <CtiLabel>CTI Toolbar<br />Avaya Red</CtiLabel>
        </CallGroup>
      </CallBar>
      <CallSplit>
        <CallLeft>
          <CallTabs>
            <CallGrid>
              <colgroup>
                <col width="17" />
                <col width="17" />
                <col width="159" />
                <col width="63" />
                <col width="64" />
              </colgroup>
              <thead>
                <tr>
                  <th><svg width="14" height="14" viewBox="0 0 14 14"><path d="M3 2v10l8-5z" fill="#aaa" stroke="#666" /></svg></th>
                  <th><svg width="14" height="14" viewBox="0 0 14 14"><path d="M2 4l9-3-3 11-3 1 2-7-4 1z" fill="#aaa" stroke="#777" /></svg></th>
                  <th>Customer</th>
                  <th>Duration</th>
                  <th>Pause</th>
                </tr>
              </thead>
            </CallGrid>
            <CallTab $on>Call Details</CallTab>
            <CallTab>Work History</CallTab>
            <CallTab>Agent Info</CallTab>
          </CallTabs>
          <NoCall>No Active Call</NoCall>
        </CallLeft>
        <Status>
          <Online>
            OnLine:
            <svg width="24" height="25" viewBox="0 0 24 25">
              <path fill="#f4f4f4" d="M0 0h24v25H0z" />
              <path d="M2 20q2-6 8-9t8-8l5 3-8 10-9 7z" fill="#d8c8b8" stroke="#999" />
              <path d="M7 17l5 5L22 6" fill="none" stroke="#1fd11f" strokeWidth="4" />
            </svg>
          </Online>
          02:01:13
          <Aux>auxwork: 15-PVA Non-<br />Phone</Aux>
        </Status>
      </CallSplit>
    </CallMain>
    <MoveStrip>
      <svg width="16" height="16" viewBox="0 0 16 16" fill="none" stroke="#111" strokeWidth="1.600">
        <path d="M8 1v14M1 8h14M5.500 3.500L8 1l2.500 2.500M5.500 12.500L8 15l2.500-2.500M3.500 5.500L1 8l2.500 2.500M12.500 5.500L15 8l-2.500 2.500" />
      </svg>
    </MoveStrip>
  </CallApp>
);

/* ---------- taskbar ---------- */

const Bar = styled.footer`
  display: flex;
  gap: 1px;
  height: 40px;
  flex: none;
  background: linear-gradient(90deg, #213640 50%, #1b2742 90%);
  color: #fff;
  font: 12px ${uiFont};
`;

const TaskButton = styled.button`
  display: flex;
  align-items: center;
  justify-content: center;
  width: 48px;
  color: #fff;
  background: ${(p) => p.$bg || 'none'};
  box-shadow: inset 0 -2px ${(p) => p.$line || 'transparent'};
`;

const SearchBox = styled.label`
  display: flex;
  align-items: center;
  gap: 10px;
  width: 343px;
  padding-left: 11px;
  background: #f2f2f2;
  border: 1px solid #bbb;
  color: #222;

  input {
    flex: 1;
    min-width: 0;
    border: 0;
    outline: 0;
    background: none;
    font-size: 15px;
  }
  input::placeholder {
    color: #333;
  }
`;

const Tray = styled.div`
  display: flex;
  align-items: center;
  gap: ${(p) => (p.$full ? 8 : 0)}px;
  margin-left: auto;
  padding-right: ${(p) => (p.$full ? 4 : 6)}px;
`;

const Clock = styled.time`
  line-height: 18px;
  padding: 0 2px;
  text-align: center;
`;

const TrayNote = styled.span`
  display: flex;
  position: relative;
  padding: 0 8px 0 8px;
`;

const TrayCount = styled.span`
  position: absolute;
  right: 0;
  bottom: -8px;
  width: 16px;
  border: 1px solid #aaa;
  border-radius: 50%;
  background: #333;
  font-size: 10px;
  line-height: 14px;
  text-align: center;
`;

const TrayEnd = styled.span`
  height: 40px;
  border-left: 1px solid #5a6478;
`;

const Magnifier = () => (
  <svg width="18" height="18" viewBox="0 0 18 18" fill="none" stroke="currentColor" strokeWidth="1.300">
    <circle cx="11" cy="7" r="5.500" />
    <path d="M7 11l-6 6" />
  </svg>
);

const TaskViewIcon = () => (
  <svg width="18" height="18" viewBox="0 0 18 18" fill="none" stroke="#fff" strokeWidth="1.300">
    <path d="M1 5h11v8H1zM1 1v1.500h11V1M1 17v-1.500h11V17M16 1v3M16 9v8" />
    <path d="M15 5.500h2v2h-2z" fill="#fff" />
  </svg>
);

const blue = '#76b9ed';

const tasks = [
  {
    name: 'Edge', line: blue,
    icon: (
      <svg width="25" height="25" viewBox="0 0 24 24">
        <path d="M.5 13Q1 4 8 3q8 0 8 6.500 0 2-1.500 3-.5 1.500 1 2.500 3 2 7.500-.5-3 9-11.500 9T.5 13z" fill="#1b78d0" />
        <path d="M.5 12Q1.500.8 12 .5 22.500 1 23.500 10q0 6-6 6.200-4-.7-3-3.200 1.500-2 0-4.500Q12 5.500 8 5.600 2 6 .5 12z" fill="#35bfd8" />
        <path d="M12 .5q9 .8 11.300 8.500Q23.500 16 17.500 16.200q-4-.7-3-3.200Q18 8 8 3.500 9.500 1 12 .5z" fill="#5fd46a" opacity=".65" />
        <path d="M8.500 10.500Q5 16 9.500 20.500q5 3.500 10.500 0-4 3.500-9 3-6-1-6.500-7 0-5 4-6z" fill="#104a92" />
      </svg>
    ),
  },
  {
    name: 'Internet Explorer',
    icon: (
      <svg width="24" height="24" viewBox="0 0 24 24" fill="none">
        <path d="M18 16.500A7 7 0 1 1 19 12H6" stroke="#49c0f3" strokeWidth="4" />
        <path d="M2 21q-2-3 5-11T21 2q2 2-1 6" stroke="#f7c62f" strokeWidth="1.800" />
      </svg>
    ),
  },
  {
    name: 'File Explorer',
    icon: (
      <svg width="22" height="19" viewBox="0 0 22 19">
        <path d="M0 0h8l2 3h12v15H0z" fill="#f5b931" />
        <path d="M0 5h22v13H0z" fill="#ffdb74" />
        <path d="M4 18v-7h14v7h-4v-4H8v4z" fill="#3c99dc" />
      </svg>
    ),
  },
  {
    name: 'Agent',
    icon: (
      <svg width="24" height="20" viewBox="0 0 24 20">
        <path d="M2 3l4 1 5 10 5-7 1 1-6 11H9z" fill="#2a3f86" />
        <path d="M1 17Q10 5 23 1q-4 3-5 7-1-3-4-2Q8 9 1 17z" fill="#1b8cc4" />
      </svg>
    ),
  },
  {
    name: 'Outlook', bg: '#a8672f', line: '#ff7b00',
    icon: (
      <svg width="23" height="22" viewBox="0 0 23 22">
        <path d="M12 5h11v12H12z" fill="#e8f1fa" />
        <path d="M13 7l4 5 6-6" fill="none" stroke="#0072c6" strokeWidth="1.500" />
        <path d="M0 2l14-2v22L0 20z" fill="#0072c6" />
        <ellipse cx="7" cy="11" rx="2.800" ry="3.600" fill="none" stroke="#fff" strokeWidth="2" />
      </svg>
    ),
  },
  {
    name: 'Chrome', bg: '#4d5f67', line: blue,
    icon: (
      <svg width="23" height="23" viewBox="0 0 24 24">
        <circle cx="12" cy="12" r="11.500" fill="#fbc116" />
        <path d="M2 6.300A11.500 11.500 0 0 0 11 23.500l5-8.500-4-3-4.500 2z" fill="#30a24c" />
        <path d="M2 6.300Q6 1 12 .5T22 6.500H12L8 13z" fill="#e0402f" />
        <circle cx="12" cy="12" r="5.500" fill="#fff" />
        <circle cx="12" cy="12" r="4.300" fill="#4285f4" />
      </svg>
    ),
  },
  {
    name: 'Slack',
    icon: (
      <svg width="22" height="22" viewBox="0 0 22 22" strokeWidth="2.400" strokeLinecap="round">
        <circle cx="11" cy="11" r="11" fill="#fff" />
        <path d="M9 5v4M5 9h4" stroke="#36c5f0" />
        <path d="M13 5v4M17 9h-1" stroke="#2eb67d" />
        <path d="M13 17v-4M13 13h4" stroke="#ecb22e" />
        <path d="M9 17v-4M5 13h1" stroke="#e01e5a" />
      </svg>
    ),
  },
  {
    name: 'Teams', line: blue,
    icon: (
      <svg width="26" height="26" viewBox="0 0 26 26">
        <circle cx="15" cy="5" r="4" fill="#7b83eb" />
        <circle cx="22" cy="6" r="2.500" fill="#5059c9" />
        <path d="M10 9h15v8q-2 5-7 5-7 0-8-6z" fill="#5a62c9" />
        <path d="M0 6h13v13H0z" fill="#4b53bc" />
        <path d="M3 9.500h7M6.500 9.500V16" stroke="#fff" strokeWidth="1.800" />
        <circle cx="19" cy="19" r="7" fill="#d0214b" />
        <path d="M21.500 15.500h-4l-.5 3.500q4-1 4 1.500 0 2.500-4 1.800" fill="none" stroke="#fff" strokeWidth="1.500" />
      </svg>
    ),
  },
  {
    name: 'Xagent', line: blue,
    icon: (
      <svg width="23" height="22" viewBox="0 0 23 22">
        <rect width="23" height="22" rx="3" fill="#cfcfcf" />
        <path d="M17 0h3q3 0 3 3v2z" fill="#f07d1a" />
        <path d="M4 5l11 12M14 5L4 17" stroke="#c01818" strokeWidth="3" />
        <path d="M15 14l2.500-6 2.500 6" fill="none" stroke="#444" strokeWidth="1.300" />
      </svg>
    ),
  },
  {
    name: 'Notepad', line: blue,
    icon: (
      <svg width="22" height="22" viewBox="0 0 22 22">
        <path d="M7 1l12 2-4 17L1 16z" fill="#8ccbd8" />
        <path d="M19 3l2 2-4 16-2-1z" fill="#e9e4d8" />
        <path d="M7 1l6 1L5 17l-4-1z" fill="#5aa7bb" />
      </svg>
    ),
  },
  {
    name: 'Calculator', line: blue,
    icon: (
      <svg width="18" height="24" viewBox="0 0 18 24">
        <path fill="#fff" d="M0 0h18v24H0z" />
        <path d="M2.500 2.500h13v4h-13z" fill="#213640" />
        <path d="M3 10h3M8 10h3M13 10h3M3 15h3M8 15h3M13 15h3M3 20h3M8 20h3M13 20h3" stroke="#213640" strokeWidth="2" />
      </svg>
    ),
  },
  {
    name: 'Paint', line: blue,
    icon: (
      <svg width="24" height="22" viewBox="0 0 24 22">
        <path d="M10 3q11 0 10 8-1 4-5 4-2 1-1 3 0 3-5 3Q1 20 1 12q1-8 9-9z" fill="#b8dcee" />
        <circle cx="6" cy="9" r="2" fill="#d8402f" />
        <circle cx="11" cy="7" r="2" fill="#f2b928" />
        <circle cx="5" cy="14" r="2" fill="#3d9e4a" />
        <circle cx="9" cy="17" r="1.800" fill="#3a6fd0" />
        <path d="M22 1l-8 13" stroke="#b0702e" strokeWidth="2.600" />
      </svg>
    ),
  },
];

const Taskbar = ({ main }) => (
  <Bar>
    <TaskButton aria-label="Start">
      <svg width="17" height="17" viewBox="0 0 17 17">
        <path d="M0 2.500l7-1V8H0zM8 1.300L17 0v8H8zM0 9h7v6.500l-7-1zM8 9h9v8l-9-1.300z" fill="#fff" />
      </svg>
    </TaskButton>
    {main ? (
      <SearchBox>
        <Magnifier />
        <input placeholder="Type here to search" />
      </SearchBox>
    ) : (
      <TaskButton aria-label="Search"><Magnifier /></TaskButton>
    )}
    <TaskButton aria-label="Task View"><TaskViewIcon /></TaskButton>
    {tasks.map((t) => (
      <TaskButton key={t.name} aria-label={t.name} $bg={t.bg} $line={t.line}>{t.icon}</TaskButton>
    ))}
    <Tray $full={main}>
      {main && (
        <>
          <svg width="12" height="7" viewBox="0 0 12 7" fill="none" stroke="#fff" strokeWidth="1.400"><path d="M1 6l5-5 5 5" /></svg>
          <svg width="16" height="14" viewBox="0 0 16 14" fill="none" stroke="#fff"><path d="M4.500 2.500h11v7h-11zM7 12.500h6M10 9.500v3M.5.5h4v4h-4zM2.500 4.500v8h3" /></svg>
          <svg width="16" height="14" viewBox="0 0 16 14" fill="none" stroke="#fff"><path d="M1 5h2l4-4v12L3 9H1zM9 5q1.500 2 0 4M11 3q3 4 0 8M13 1.500q4.500 5.500 0 11" /></svg>
        </>
      )}
      <Clock>4:28 PM<br />3/28/2021</Clock>
      {main && (
        <>
          <TrayNote>
            <svg width="16" height="16" viewBox="0 0 16 16"><path d="M0 0h16v12H7l-3 4v-4H0z" fill="#fff" /><path d="M3 4h10M3 8h10" stroke="#1b2742" /></svg>
            <TrayCount>2</TrayCount>
          </TrayNote>
          <TrayEnd />
        </>
      )}
    </Tray>
  </Bar>
);

/* ---------- app ---------- */

const leftTabs = [
  { title: 'Unit 8 Lab Assignment 116 - AC1', icon: <Blackboard /> },
  { title: 'On January 1, 2020, Crane Corpor', icon: <FcGoogle size={16} /> },
  { title: 'Course Hero', icon: <CourseHero /> },
  { title: 'On January 1, 2020, Wildhorse Co', icon: <FcGoogle size={16} /> },
  { title: 'WileyPLUS', icon: <Globe /> },
];

const rightTabs = [{ title: 'On January 1, 2014, geffrey corpo', icon: <YahooIcon /> }];

const App = () => (
  <>
    <GlobalStyle />
    <Desktop>
      <Monitor $pad="0 0 3px">
        <Window>
          <BrowserChrome tabs={leftTabs} active={4} url="edugen.wileyplus.com/edugen/lti/main.uni" host={137} zoomed marks={14} />
          <Wiley />
        </Window>
        <Taskbar />
      </Monitor>
      <Monitor $pad="183px 0 0">
        <Window>
          <BrowserChrome tabs={rightTabs} active={0} inactive url="answers.yahoo.com/question/index?qid=20130920131559AAFhEAC" host={121} marks={12} />
          <Yahoo />
        </Window>
        <CallToolbar />
        <Taskbar main />
      </Monitor>
    </Desktop>
  </>
);

export default App;
